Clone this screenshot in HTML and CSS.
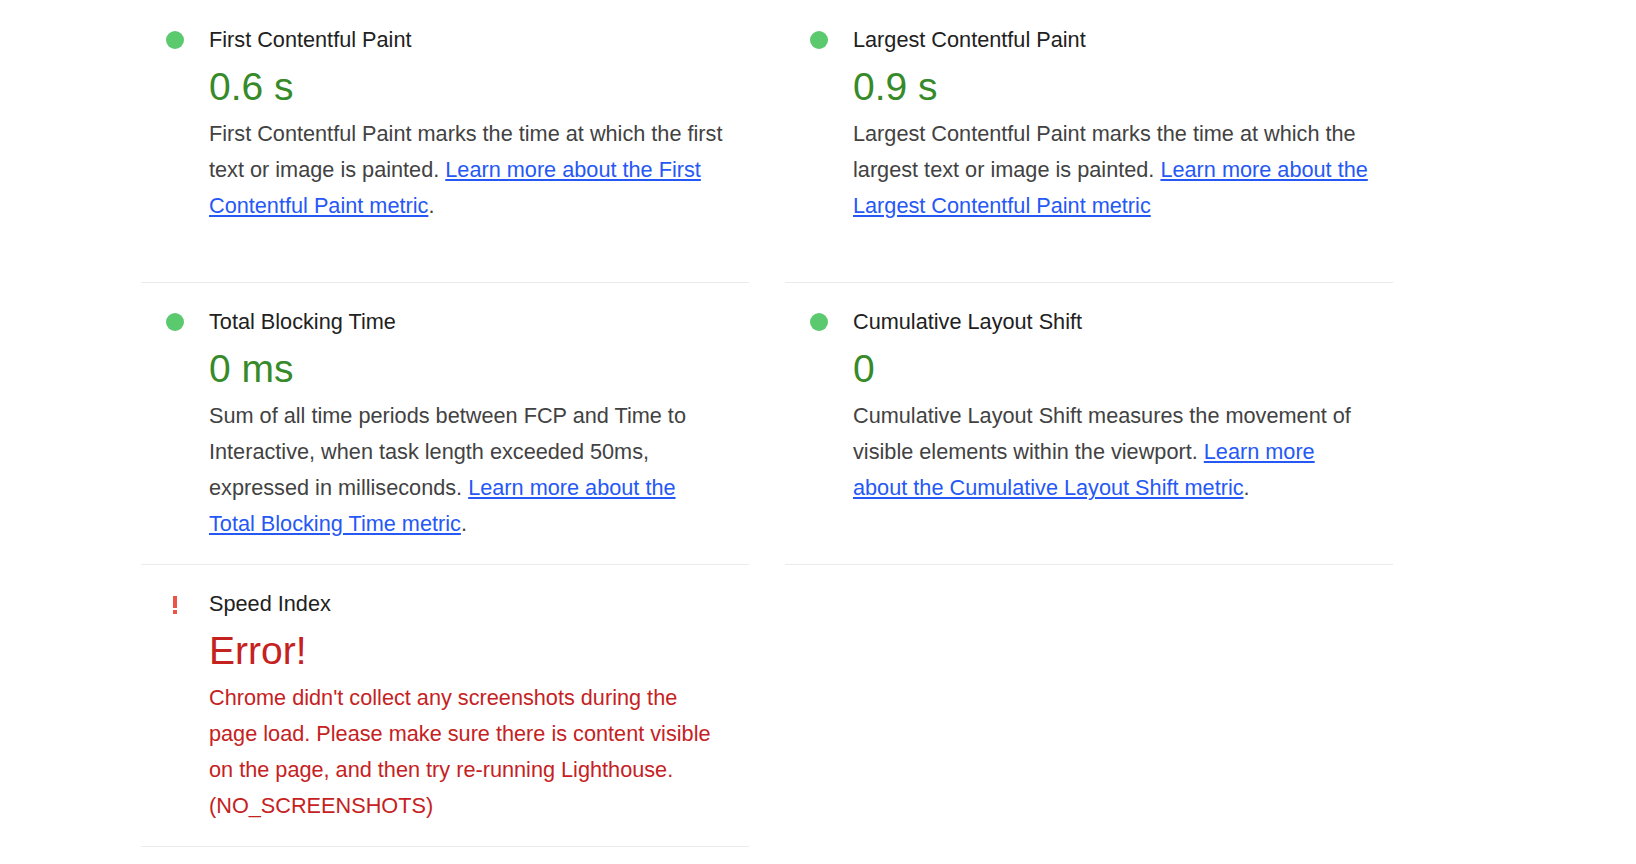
FILE: index.html
```html
<!DOCTYPE html>
<html lang="en">
<head>
<meta charset="utf-8">
<title>Metrics</title>
<link rel="stylesheet" href="styles.css">
</head>
<body>
<div class="metrics">
  <div class="metric">
    <span class="icon icon--pass"></span>
    <div class="body">
      <div class="title">First Contentful Paint</div>
      <div class="value value--pass">0.6 s</div>
      <div class="desc">First Contentful Paint marks the time at which the first text or image is painted. <a href="#">Learn more about the First Contentful Paint metric</a>.</div>
    </div>
  </div>
  <div class="metric">
    <span class="icon icon--pass"></span>
    <div class="body">
      <div class="title">Largest Contentful Paint</div>
      <div class="value value--pass">0.9 s</div>
      <div class="desc">Largest Contentful Paint marks the time at which the largest text or image is painted. <a href="#">Learn more about the Largest Contentful Paint metric</a></div>
    </div>
  </div>
  <div class="metric">
    <span class="icon icon--pass"></span>
    <div class="body">
      <div class="title">Total Blocking Time</div>
      <div class="value value--pass">0 ms</div>
      <div class="desc">Sum of all time periods between FCP and Time to Interactive, when task length exceeded 50ms, expressed in milliseconds. <a href="#">Learn more about the Total Blocking Time metric</a>.</div>
    </div>
  </div>
  <div class="metric">
    <span class="icon icon--pass"></span>
    <div class="body">
      <div class="title">Cumulative Layout Shift</div>
      <div class="value value--pass">0</div>
      <div class="desc">Cumulative Layout Shift measures the movement of visible elements within the viewport. <a href="#">Learn more about the Cumulative Layout Shift metric</a>.</div>
    </div>
  </div>
  <div class="metric">
    <svg class="icon icon--error" width="18" height="18" viewBox="0 0 18 18" aria-hidden="true">
      <rect x="7" y="0" width="4" height="12" fill="#ea5548"/>
      <rect x="7" y="14" width="4" height="4" fill="#ea5548"/>
    </svg>
    <div class="body">
      <div class="title">Speed Index</div>
      <div class="value value--error">Error!</div>
      <div class="desc desc--error">Chrome didn't collect any screenshots during the page load. Please make sure there is content visible on the page, and then try re-running Lighthouse. (NO_SCREENSHOTS)</div>
    </div>
  </div>
</div>
</body>
</html>
```

FILE: styles.css
```css
html, body {
  margin: 0;
  padding: 0;
  background: #ffffff;
}

body {
  font-family: "Liberation Sans", Arial, Helvetica, sans-serif;
  font-size: 21.7px;
  line-height: 36px;
  color: #212121;
}

.metrics {
  display: grid;
  grid-template-columns: 608px 608px;
  grid-auto-rows: minmax(282px, auto);
  column-gap: 36px;
  margin: 1px 0 0 141px;
}

.metric {
  box-sizing: border-box;
  display: flex;
  align-items: flex-start;
  padding: 21px 23px 22px 0;
  border-bottom: 1px solid #ebebeb;
}

.icon {
  flex: none;
  width: 18px;
  height: 18px;
  margin: 9px 25px 0 25px;
}

.icon--pass {
  border-radius: 50%;
  background: #5bc96e;
}

.icon--error {
  display: block;
  margin-top: 10px;
}

.body {
  flex: 1;
  min-width: 0;
}

.title {
  color: #212121;
}

.value {
  font-size: 39px;
  line-height: 40px;
  margin: 9px 0;
  white-space: nowrap;
}

.value--pass {
  color: #378a29;
}

.value--error {
  color: #c5221f;
}

.desc {
  color: #424242;
}

.desc--error {
  color: #c5221f;
}

.desc a {
  color: #2558f5;
  text-decoration: underline;
}
```
